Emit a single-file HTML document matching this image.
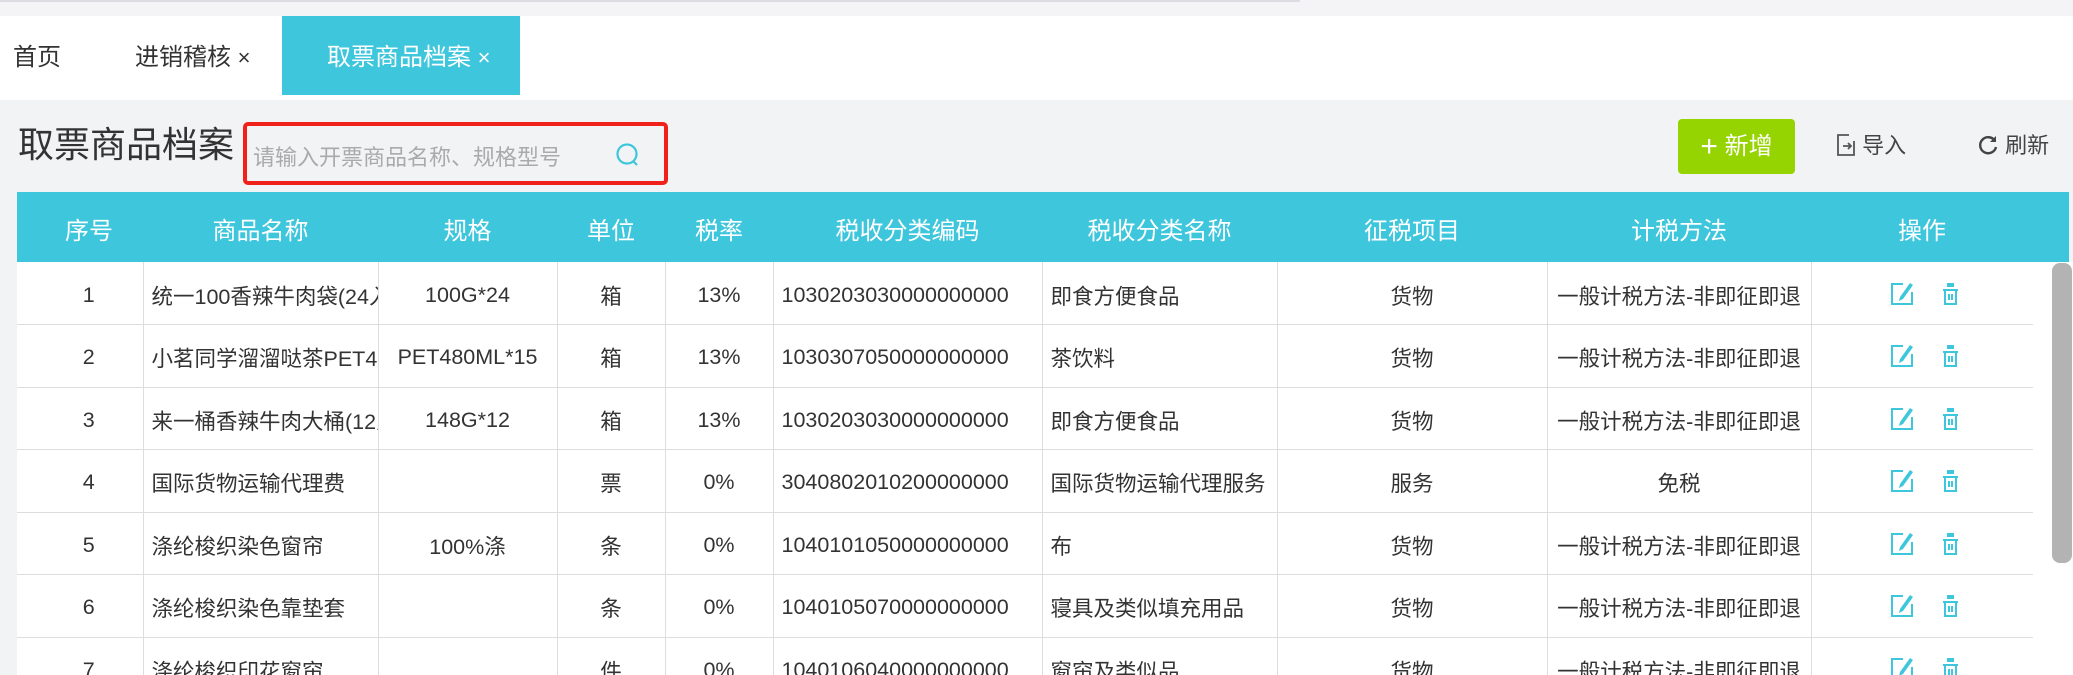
<!DOCTYPE html>
<html><head><meta charset="utf-8"><style>
*{margin:0;padding:0;box-sizing:border-box}
body{width:2073px;height:675px;overflow:hidden;background:#f2f3f5;font-family:"Liberation Sans","Noto Sans CJK SC",sans-serif;color:#333;position:relative}
.abs{position:absolute}
.tabs{left:0;top:16px;width:2073px;height:84px;background:#fff}
.tab{position:absolute;top:4px;height:75px;line-height:75px;font-size:24px;color:#333}
.act{top:0;left:282px;width:238px;height:79px;line-height:83px;background:#3ec6dc;color:#fff;padding-left:45px}
.title{left:18px;top:122px;font-size:36px;line-height:46px;color:#333}
.search{left:243px;top:122px;width:425px;height:63px;border:4px solid #f0201a;border-radius:5px}
.search span{position:absolute;left:6px;top:14px;font-size:22px;color:#aaa}
.btn{left:1678px;top:119px;width:117px;height:55px;background:#95d400;border-radius:4px;color:#fff;font-size:24px;line-height:55px;text-align:center}
.tool{top:131px;font-size:22px;color:#444;line-height:30px}
.wrap{position:absolute;left:17px;top:192px;width:2016px;height:483px;overflow:hidden}
table{border-collapse:collapse;table-layout:fixed;width:2016px}
th{height:70px;background:#3ec6dc;color:#fff;font-weight:normal;font-size:24px;padding-top:2px}
td{height:62.5px;background:#fff;font-size:21.5px;text-align:center;border-bottom:1px solid #ddd;border-left:1px solid #ddd;white-space:nowrap;overflow:hidden;color:#333;padding-top:4px}
td:first-child,th:first-child{border-left:none;padding-left:18px}
td.l{text-align:left;padding-left:8px}
td:last-child{color:transparent}
.hdr{left:2033px;top:192px;width:36px;height:70px;background:#3ec6dc}
.side{left:2033px;top:262px;width:40px;height:413px;background:#fff}
.sb{left:2052px;top:263px;width:20px;height:300px;background:#b3b3b3;border-radius:8px}
</style></head><body>
<div class="abs" style="left:0;top:0;width:2073px;height:16px;background:#f4f4f6"></div>
<div class="abs" style="left:0;top:0;width:1300px;height:2px;background:#dcdde2"></div>
<div class="abs tabs">
<div class="tab" style="left:13px">首页</div>
<div class="tab" style="left:135px">进销稽核 <span style="font-size:22px">×</span></div>
<div class="tab act">取票商品档案 <span style="font-size:22px">×</span></div>
</div>
<div class="abs title">取票商品档案</div>
<div class="abs search"><span>请输入开票商品名称、规格型号</span>
<svg style="position:absolute;left:368px;top:16px" width="26" height="26" viewBox="0 0 26 26"><circle cx="12" cy="12" r="9.5" fill="none" stroke="#3ec6dc" stroke-width="2.2"/><path d="M18 19l4 4" stroke="#3ec6dc" stroke-width="2.2"/></svg></div>
<div class="abs btn"><span style="font-size:30px;font-weight:300;vertical-align:-2px">+</span> 新增</div>
<div class="abs tool" style="left:1836px"><svg width="20" height="24" viewBox="0 0 20 24" style="vertical-align:-4px"><path d="M13 2H2v20h16V8" fill="none" stroke="#555" stroke-width="1.8"/><path d="M7 13h8M12 10l3 3-3 3" fill="none" stroke="#555" stroke-width="1.8"/></svg> 导入</div>
<div class="abs tool" style="left:1977px"><svg width="22" height="22" viewBox="0 0 22 22" style="vertical-align:-3px"><path d="M18 7A8 8 0 1 0 19 13" fill="none" stroke="#444" stroke-width="2.4"/><path d="M19 2v6h-6" fill="#444"/></svg> 刷新</div>
<div class="abs hdr"></div>
<div class="abs side"></div>
<div class="wrap"><table>
<colgroup><col style="width:126px"><col style="width:235px"><col style="width:179px"><col style="width:108px"><col style="width:108px"><col style="width:269px"><col style="width:235px"><col style="width:270px"><col style="width:264px"><col style="width:222px"></colgroup>
<tr><th>序号</th><th>商品名称</th><th>规格</th><th>单位</th><th>税率</th><th>税收分类编码</th><th>税收分类名称</th><th>征税项目</th><th>计税方法</th><th>操作</th></tr>
<tr><td>1</td><td class="l">统一100香辣牛肉袋(24入)</td><td>100G*24</td><td>箱</td><td>13%</td><td class="l">1030203030000000000</td><td class="l">即食方便食品</td><td>货物</td><td>一般计税方法-非即征即退</td><td>I</td></tr>
<tr><td>2</td><td class="l">小茗同学溜溜哒茶PET480</td><td>PET480ML*15</td><td>箱</td><td>13%</td><td class="l">1030307050000000000</td><td class="l">茶饮料</td><td>货物</td><td>一般计税方法-非即征即退</td><td>I</td></tr>
<tr><td>3</td><td class="l">来一桶香辣牛肉大桶(12入)</td><td>148G*12</td><td>箱</td><td>13%</td><td class="l">1030203030000000000</td><td class="l">即食方便食品</td><td>货物</td><td>一般计税方法-非即征即退</td><td>I</td></tr>
<tr><td>4</td><td class="l">国际货物运输代理费</td><td></td><td>票</td><td>0%</td><td class="l">3040802010200000000</td><td class="l">国际货物运输代理服务</td><td>服务</td><td>免税</td><td>I</td></tr>
<tr><td>5</td><td class="l">涤纶梭织染色窗帘</td><td>100%涤</td><td>条</td><td>0%</td><td class="l">1040101050000000000</td><td class="l">布</td><td>货物</td><td>一般计税方法-非即征即退</td><td>I</td></tr>
<tr><td>6</td><td class="l">涤纶梭织染色靠垫套</td><td></td><td>条</td><td>0%</td><td class="l">1040105070000000000</td><td class="l">寝具及类似填充用品</td><td>货物</td><td>一般计税方法-非即征即退</td><td>I</td></tr>
<tr><td>7</td><td class="l">涤纶梭织印花窗帘</td><td></td><td>件</td><td>0%</td><td class="l">1040106040000000000</td><td class="l">窗帘及类似品</td><td>货物</td><td>一般计税方法-非即征即退</td><td>I</td></tr>
</table></div>
<div class="abs sb"></div>
<svg class="abs" style="left:1878px;top:262px" width="90" height="413" viewBox="0 0 90 413">
<defs><g id="ic">
<path d="M13 2H2v20h20V10" fill="none" stroke="#3ec6dc" stroke-width="2"/><path d="M20 1l3 2-10 14-4 2 1-4z" fill="#3ec6dc"/>
<path d="M57 4h7M53 8h15M55 8v14h11V8M59 12v6M62 12v6M58 4v-2h5v2" fill="none" stroke="#3ec6dc" stroke-width="2"/>
</g></defs>
<use href="#ic" x="12" y="20"/><use href="#ic" x="12" y="82"/><use href="#ic" x="12" y="145"/><use href="#ic" x="12" y="207"/><use href="#ic" x="12" y="270"/><use href="#ic" x="12" y="332"/><use href="#ic" x="12" y="395"/>
</svg>
</body></html>
